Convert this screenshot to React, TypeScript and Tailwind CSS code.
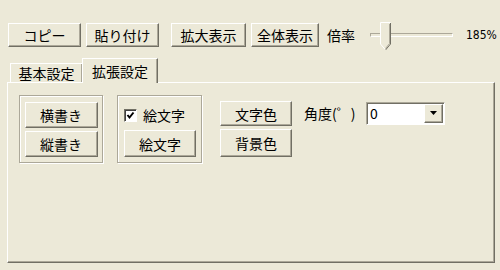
import React from "react";

const font = { fontFamily: '"Noto Sans CJK JP", "Noto Sans", sans-serif' };

function Btn({ children, w, h }: { children: React.ReactNode; w: string; h: string }) {
  return (
    <div
      className={`${w} ${h} flex items-center justify-center bg-[#ECE9D8] border border-t-white border-l-white border-r-[#716F64] border-b-[#716F64] shadow-[inset_-1px_-1px_0_#ACA899] text-[14px] leading-none text-black`}
    >
      {children}
    </div>
  );
}

export default function App() {
  return (
    <div className="w-[500px] h-[270px] bg-[#ECE9D8] pt-[23px] overflow-hidden" style={font}>
      {/* toolbar */}
      <div className="flex items-center h-[24px] pl-[8px]">
        <Btn w="w-[73px]" h="h-[24px]">コピー</Btn>
        <div className="w-[5px]" />
        <Btn w="w-[73px]" h="h-[24px]">貼り付け</Btn>
        <div className="w-[12px]" />
        <Btn w="w-[75px]" h="h-[24px]">拡大表示</Btn>
        <div className="w-[5px]" />
        <Btn w="w-[68px]" h="h-[24px]">全体表示</Btn>
        <div className="ml-[8px] w-[40px] text-[14px] leading-none">倍率</div>
        <div className="relative w-[88px] h-[30px] mt-[4px]">
          <div className="absolute left-[3px] top-[11px] w-[83px] h-[4px] border border-t-[#ACA899] border-l-[#ACA899] border-r-white border-b-white bg-[#ECE9D8]" />
          <svg className="absolute left-[13px] top-0" width="12" height="29" viewBox="0 0 12 29">
            <polygon points="0.5,0.5 10.5,0.5 10.5,22 5.5,28 0.5,22" fill="#ECE9D8" />
            <polyline points="0.5,22 0.5,0.5 10.5,0.5" fill="none" stroke="#ffffff" />
            <polyline points="10.5,1 10.5,22 5.5,28" fill="none" stroke="#716F64" />
            <polyline points="9.5,2 9.5,21.5 5.5,26.5" fill="none" stroke="#ACA899" />
            <polyline points="0.5,22 5.2,27.5" fill="none" stroke="#ffffff" />
          </svg>
        </div>
        <div className="ml-[11px] text-[12px] leading-none" style={{ fontFamily: '"DejaVu Sans Condensed", "Liberation Sans Narrow", sans-serif' }}>185%</div>
      </div>

      {/* tabs + panel */}
      <div className="ml-[7px] mt-[11px] w-[488px]">
        <div className="flex items-end h-[24px] pl-[3px]">
          <div className="w-[72px] h-[19px] flex items-center justify-center border-t border-l border-t-white border-l-white text-[14px] leading-none shadow-[inset_-1px_0_0_#ACA899]">
            基本設定
          </div>
          <div className="relative z-10 -mb-px w-[76px] h-[25px] bg-[#ECE9D8] flex items-start pt-[5px] justify-center border-t border-l border-r border-t-white border-l-white border-r-[#716F64] shadow-[inset_-1px_0_0_#ACA899] text-[14px] leading-none">
            拡張設定
          </div>
        </div>
        <div className="h-[181px] border border-t-white border-l-white border-r-[#716F64] border-b-[#716F64] shadow-[inset_-1px_-1px_0_#ACA899] pl-[11px] pt-[12px] flex items-start">
          {/* group 1 */}
          <div className="w-[84px] h-[68px] border border-[#ACA899] shadow-[inset_1px_1px_0_#fff,1px_1px_0_#fff] flex flex-col items-center pt-[6px] gap-[3px]">
            <Btn w="w-[73px]" h="h-[26px]">横書き</Btn>
            <Btn w="w-[73px]" h="h-[26px]">縦書き</Btn>
          </div>
          {/* group 2 */}
          <div className="ml-[14px] w-[85px] h-[68px] border border-[#ACA899] shadow-[inset_1px_1px_0_#fff,1px_1px_0_#fff] flex flex-col pl-[6px] pt-[12px]">
            <div className="flex items-center h-[14px]">
              <div className="w-[13px] h-[13px] bg-white border border-t-[#716F64] border-l-[#716F64] border-r-white border-b-white shadow-[inset_1px_1px_0_#404040] flex items-center justify-center">
                <svg width="9" height="9" viewBox="0 0 9 9">
                  <polyline points="1.5,4 3.5,6.5 7.5,1.5" fill="none" stroke="#000" strokeWidth="2" />
                </svg>
              </div>
              <span className="ml-[6px] text-[14px] leading-none">絵文字</span>
            </div>
            <div className="mt-[8px]">
              <Btn w="w-[72px]" h="h-[27px]">絵文字</Btn>
            </div>
          </div>
          {/* column 3 */}
          <div className="ml-[18px] mt-[6px] flex flex-col gap-[3px]">
            <Btn w="w-[72px]" h="h-[25px]">文字色</Btn>
            <Btn w="w-[72px]" h="h-[28px]">背景色</Btn>
          </div>
          <div className="ml-[12px] mt-[6px] flex items-center h-[24px]">
            <span className="w-[62px] text-[14px] leading-none">角度(゜)</span>
            <div className="w-[79px] h-[23px] bg-white border border-t-[#ACA899] border-l-[#ACA899] border-r-white border-b-white shadow-[inset_1px_1px_0_#716F64] flex items-center">
              <span className="ml-[3px] text-[14px] leading-none flex-1">0</span>
              <div className="w-[19px] h-[19px] mr-px bg-[#ECE9D8] border border-t-white border-l-white border-r-[#716F64] border-b-[#716F64] shadow-[inset_-1px_-1px_0_#ACA899] flex items-center justify-center">
                <svg width="7" height="4" viewBox="0 0 7 4">
                  <polygon points="0,0 7,0 3.5,4" fill="#000" />
                </svg>
              </div>
            </div>
          </div>
        </div>
      </div>
    </div>
  );
}
